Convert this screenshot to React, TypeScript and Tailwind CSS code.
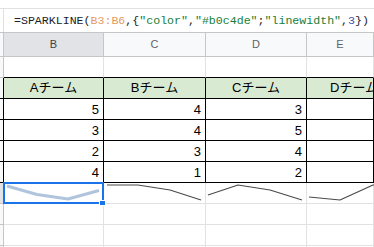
import React from 'react';

const cols = [
  { key: 'B', w: 'w-[100px]' },
  { key: 'C', w: 'w-[102px]' },
  { key: 'D', w: 'w-[101px]' },
  { key: 'E', w: 'flex-1' },
];

const teams = ['Aチーム', 'Bチーム', 'Cチーム', 'Dチーム'];

const data = [
  ['5', '4', '3', ''],
  ['3', '4', '5', ''],
  ['2', '3', '4', ''],
  ['4', '1', '2', ''],
];

const font = "font-['Liberation_Sans','Noto_Sans_CJK_JP',sans-serif]";

const Spark = ({ points, color, width }: { points: string; color: string; width: number }) => (
  <svg className="absolute inset-0" width="100%" height="100%" overflow="visible">
    <polyline points={points} fill="none" stroke={color} strokeWidth={width} strokeLinejoin="round" strokeLinecap="butt" />
  </svg>
);

const sparks = [
  { points: '3,3 33,11.5 64,16 95,7.5', color: '#b0c4de', width: 3 },
  { points: '3,2 34,2 66,7 97,17', color: '#4a4a4a', width: 1.2 },
  { points: '2,12 32,2 64,7 96,17', color: '#4a4a4a', width: 1.2 },
  { points: '2,14 33,17 66,2 99,-4', color: '#4a4a4a', width: 1.2 },
];

export default function App() {
  return (
    <div className={`w-[374px] h-[247px] overflow-hidden bg-white ${font}`}>
      <div className="h-[9px] border-b border-[#e0e0e0]" />

      {/* formula bar */}
      <div className="h-[24px] flex border-b border-[#c4c7c5]">
        <div className="w-[4px] border-r border-[#e0e0e0]" />
        <div className="flex items-center pl-[10px] text-[11.6px] whitespace-nowrap font-['Liberation_Mono',monospace] text-[#202124]">
          <span>=SPARKLINE(</span>
          <span className="text-[#e69a62]">B3:B6</span>
          <span>,{'{'}</span>
          <span className="text-[#188038]">"color"</span>
          <span>,</span>
          <span className="text-[#188038]">"#b0c4de"</span>
          <span>;</span>
          <span className="text-[#188038]">"linewidth"</span>
          <span>,</span>
          <span className="text-[#3c4fa8]">3</span>
          <span>{'})'}</span>
        </div>
      </div>

      {/* column headers */}
      <div className="h-[24px] flex border-b border-[#c4c7c5] text-[11px] text-[#5f6368]">
        <div className="w-[4px] bg-[#f8f9fa] border-r border-[#c4c7c5]" />
        {cols.map((c, i) => (
          <div
            key={c.key}
            className={`${c.w} flex items-center justify-center border-r border-[#c4c7c5] ${i === 0 ? 'bg-[#e1e3e6] text-[#3c4043]' : 'bg-[#f8f9fa]'}`}
          >
            {c.key}
          </div>
        ))}
      </div>

      {/* row 1 empty */}
      <div className="h-[21px] flex">
        <div className="w-[4px] bg-[#f8f9fa] border-r border-b border-[#c4c7c5]" />
        {cols.map((c) => (
          <div key={c.key} className={`${c.w} border-r border-[#e2e2e3] border-b-black border-b`} />
        ))}
      </div>

      {/* team header row */}
      <div className="h-[21px] flex text-[13px] text-black">
        <div className="w-[4px] bg-[#f8f9fa] border-r border-b border-black" />
        {cols.map((c, i) => (
          <div key={c.key} className={`${c.w} flex items-center justify-center border-r border-b border-black bg-[#d9ead3] whitespace-nowrap overflow-hidden`}>
            <span className={i === 3 ? 'ml-[28px]' : ''}>{teams[i]}</span>
          </div>
        ))}
      </div>

      {data.map((row, r) => (
        <div key={r} className="h-[21px] flex text-[13px] text-black">
          <div className="w-[4px] bg-[#f8f9fa] border-r border-b border-black" />
          {cols.map((c, i) => (
            <div key={c.key} className={`${c.w} flex items-center justify-end pr-[4px] pt-[1px] border-r border-b border-black`}>
              {row[i]}
            </div>
          ))}
        </div>
      ))}

      {/* sparkline row */}
      <div className="h-[21px] flex relative">
        <div className="w-[4px] bg-[#e1e3e6] border-r border-b border-[#c4c7c5]" />
        {cols.map((c, i) => (
          <div key={c.key} className={`${c.w} relative border-r border-b border-[#e2e2e3]`}>
            <Spark {...sparks[i]} />
          </div>
        ))}
        {/* selection */}
        <div className="absolute left-[3px] top-[-1px] w-[101px] h-[22px] border-2 border-[#1a73e8] pointer-events-none" />
        <div className="absolute left-[99px] top-[17px] w-[7px] h-[6px] bg-[#1a73e8] border border-white" />
      </div>

      {[0, 1, 2].map((r) => (
        <div key={r} className="h-[21px] flex">
          <div className="w-[4px] bg-[#f8f9fa] border-r border-b border-[#c4c7c5]" />
          {cols.map((c) => (
            <div key={c.key} className={`${c.w} border-r border-b border-[#e2e2e3]`} />
          ))}
        </div>
      ))}
    </div>
  );
}
